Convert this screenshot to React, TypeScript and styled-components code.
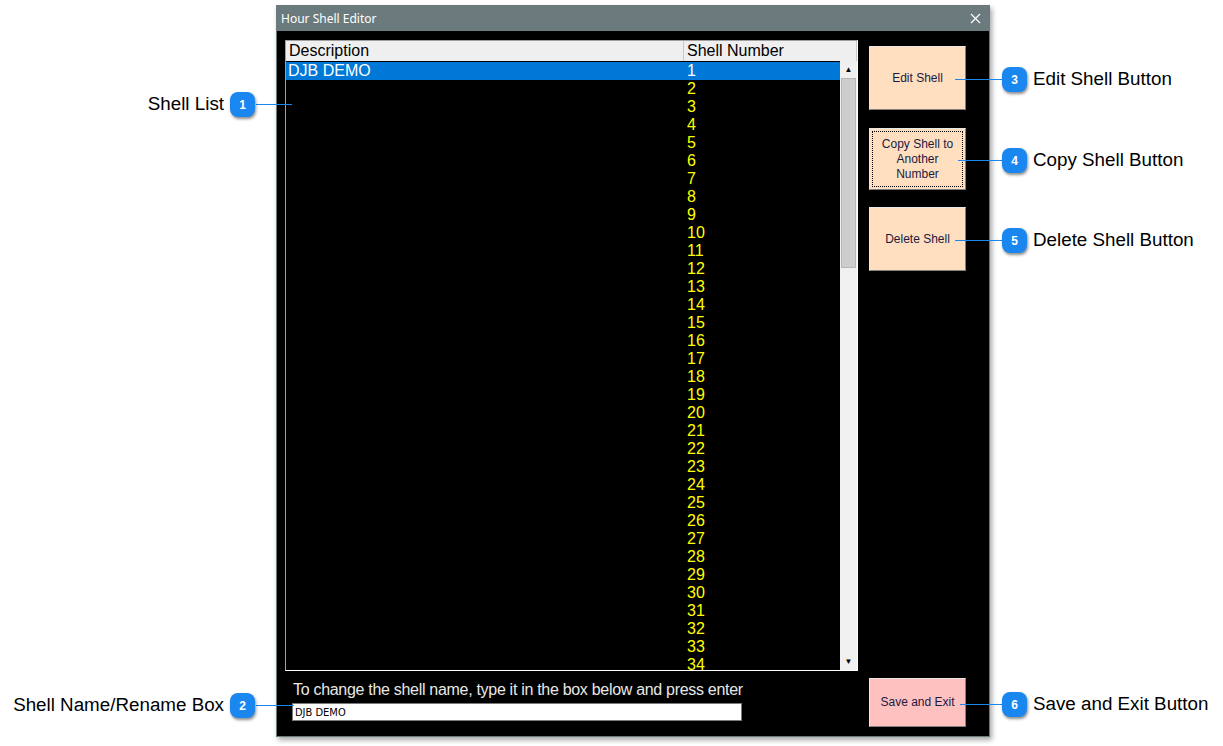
import React from "react";
import styled, { createGlobalStyle } from "styled-components";

const Global = createGlobalStyle`
  body { margin: 0; background: #fff; font-family: "Liberation Sans", Arial, sans-serif; }
`;

const Page = styled.div`
  position: relative;
  width: 1223px;
  height: 746px;
  overflow: hidden;
  padding: 5px 0 0 276px;
  box-sizing: border-box;
`;

const Window = styled.div`
  width: 714px;
  height: 732px;
  background: #000;
  box-shadow: 2px 3px 5px rgba(0,0,0,0.35);
  border: 1px solid #6b7a7c;
  box-sizing: border-box;
  display: flex;
  flex-direction: column;
`;

const TitleBar = styled.div`
  height: 25px;
  background: #6b7a7c;
  color: #fff;
  font-family: "Noto Sans", sans-serif;
  font-size: 12px;
  display: flex;
  align-items: center;
  justify-content: space-between;
  padding: 0 8px 0 4px;
`;

const Body = styled.div`
  flex: 1;
  display: flex;
  padding: 9px 0 0 8px;
  gap: 11px;
`;

const Left = styled.div`
  display: flex;
  flex-direction: column;
  width: 573px;
`;

const List = styled.div`
  height: 631px;
  border: 1px solid #a0a0a0;
  border-right-color: #fff;
  border-bottom-color: #fff;
  box-sizing: border-box;
  display: flex;
  flex-direction: column;
  overflow: hidden;
`;

const Header = styled.div`
  height: 20px;
  background: #efefef;
  display: flex;
  font-size: 16px;
  color: #000;
  line-height: 20px;
  flex-shrink: 0;
`;

const HeadCell = styled.div<{ $w?: number }>`
  width: ${({ $w }) => ($w ? `${$w}px` : "auto")};
  flex: ${({ $w }) => ($w ? "none" : 1)};
  padding-left: 3px;
  border-right: 1px solid #c8c8c8;
  box-sizing: border-box;
`;

const ListBody = styled.div`
  flex: 1;
  display: flex;
  overflow: hidden;
`;

const Rows = styled.div`
  flex: 1;
  padding-top: 1px;
`;

const Row = styled.div<{ $sel?: boolean }>`
  height: 18px;
  line-height: 18px;
  font-size: 16px;
  display: flex;
  background: ${({ $sel }) => ($sel ? "#0078d7" : "transparent")};
  color: ${({ $sel }) => ($sel ? "#fff" : "#ffff00")};
`;

const Cell = styled.div<{ $w?: number }>`
  width: ${({ $w }) => ($w ? `${$w}px` : "auto")};
  flex: ${({ $w }) => ($w ? "none" : 1)};
  padding-left: 2px;
`;

const Scroll = styled.div`
  width: 17px;
  background: #f0f0f0;
  display: flex;
  flex-direction: column;
  align-items: center;
`;

const Arrow = styled.div`
  height: 17px;
  width: 17px;
  display: flex;
  align-items: center;
  justify-content: center;
  font-size: 8px;
  color: #000;
`;

const Thumb = styled.div`
  width: 15px;
  height: 190px;
  background: #cdcdcd;
  border: 1px solid #b8b8b8;
  box-sizing: border-box;
`;

const Spacer = styled.div`flex: 1;`;

const Hint = styled.div`
  color: #e8e8e8;
  font-size: 16px;
  margin: 10px 0 0 8px;
  letter-spacing: -0.3px;
`;

const NameBox = styled.input`
  margin: 4px 0 0 7px;
  width: 450px;
  height: 18px;
  box-sizing: border-box;
  border: 1px solid #7a7a7a;
  font-family: "DejaVu Sans Condensed", "Liberation Sans", sans-serif;
  font-size: 11px;
  padding: 0 2px;
  outline: none;
`;

const Right = styled.div`
  display: flex;
  flex-direction: column;
  padding-top: 6px;
  width: 97px;
`;

const Btn = styled.div<{ $h: number; $mt: number; $bg?: string; $focus?: boolean }>`
  height: ${({ $h }) => $h}px;
  margin-top: ${({ $mt }) => $mt}px;
  background: ${({ $bg }) => $bg || "#ffdfc0"};
  border: 1px solid #e8e8e8;
  border-right-color: #808080;
  border-bottom-color: #808080;
  box-sizing: border-box;
  display: flex;
  align-items: center;
  justify-content: center;
  text-align: center;
  font-size: 12px;
  line-height: 15px;
  color: #1a1a40;
  outline: ${({ $focus }) => ($focus ? "1px dotted #000" : "none")};
  outline-offset: -4px;
`;

const Badge = styled.div`
  position: absolute;
  width: 25px;
  height: 25px;
  border-radius: 8px;
  background: #1a86f0;
  color: #fff;
  font-size: 12px;
  font-weight: bold;
  display: flex;
  align-items: center;
  justify-content: center;
  box-shadow: 1px 2px 3px rgba(0,0,0,0.45);
`;

const Line = styled.div`
  position: absolute;
  height: 1px;
  background: #1a86f0;
`;

const Label = styled.div`
  position: absolute;
  font-size: 18.8px;
  color: #000;
  white-space: nowrap;
  line-height: 20px;
`;

const callouts = [
  { n: 1, x: 230, y: 92, lx: 256, lw: 36, label: "Shell List", left: false },
  { n: 2, x: 230, y: 693, lx: 256, lw: 38, label: "Shell Name/Rename Box", left: false },
  { n: 3, x: 1002, y: 67, lx: 955, lw: 47, label: "Edit Shell Button", left: true },
  { n: 4, x: 1002, y: 148, lx: 958, lw: 44, label: "Copy Shell Button", left: true },
  { n: 5, x: 1002, y: 228, lx: 955, lw: 47, label: "Delete Shell Button", left: true },
  { n: 6, x: 1002, y: 692, lx: 960, lw: 42, label: "Save and Exit Button", left: true },
];

export default function App() {
  const nums = Array.from({ length: 34 }, (_, i) => i + 1);
  return (
    <Page>
      <Global />
      <Window>
        <TitleBar>
          <span>Hour Shell Editor</span>
          <svg width="11" height="11" viewBox="0 0 11 11">
            <path d="M1 1L10 10M10 1L1 10" stroke="#fff" strokeWidth="1.2" />
          </svg>
        </TitleBar>
        <Body>
          <Left>
            <List>
              <Header>
                <HeadCell $w={398}>Description</HeadCell>
                <HeadCell>Shell Number</HeadCell>
              </Header>
              <ListBody>
                <Rows>
                  {nums.map((n) => (
                    <Row key={n} $sel={n === 1}>
                      <Cell $w={397}>{n === 1 ? "DJB DEMO" : ""}</Cell>
                      <Cell>{n}</Cell>
                    </Row>
                  ))}
                </Rows>
                <Scroll>
                  <Arrow>▲</Arrow>
                  <Thumb />
                  <Spacer />
                  <Arrow>▼</Arrow>
                </Scroll>
              </ListBody>
            </List>
            <Hint>To change the shell name, type it in the box below and press enter</Hint>
            <NameBox defaultValue="DJB DEMO" />
          </Left>
          <Right>
            <Btn $h={64} $mt={0}>Edit Shell</Btn>
            <Btn $h={62} $mt={18} $focus>Copy Shell to<br />Another<br />Number</Btn>
            <Btn $h={64} $mt={17}>Delete Shell</Btn>
            <Spacer />
            <Btn $h={49} $mt={0} $bg="#ffc0c0">Save and Exit</Btn>
            <div style={{ height: 9 }} />
          </Right>
        </Body>
      </Window>
      {callouts.map((c) => (
        <React.Fragment key={c.n}>
          <Line style={{ left: c.lx, top: c.y + 12, width: c.lw }} />
          <Badge style={{ left: c.x, top: c.y }}>{c.n}</Badge>
          <Label style={c.left ? { left: 1033, top: c.y + 2 } : { right: 1223 - 224, top: c.y + 2 }}>
            {c.label}
          </Label>
        </React.Fragment>
      ))}
    </Page>
  );
}
